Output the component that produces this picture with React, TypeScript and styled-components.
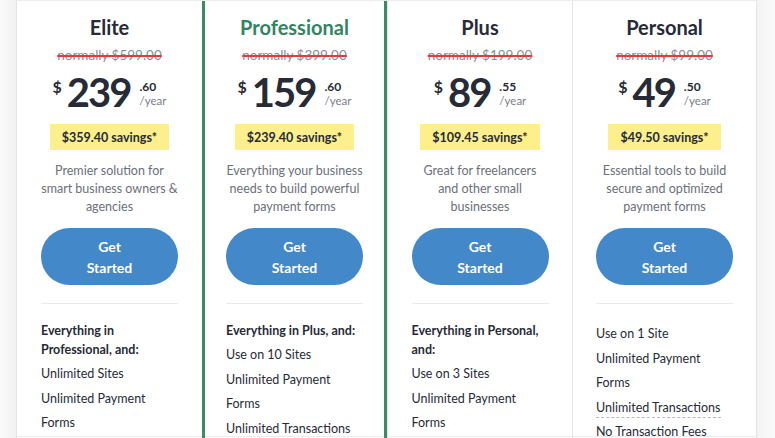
import React from "react";
import styled, { createGlobalStyle } from "styled-components";

const Global = createGlobalStyle`
  html, body { margin: 0; padding: 0; background: #ffffff; }
  body { font-family: "Lato", "Liberation Sans", sans-serif; color: #262b36; }
  * { box-sizing: border-box; }
`;

const Page = styled.div`
  width: 775px;
  height: 438px;
  overflow: hidden;
  display: flex;
  background: #ffffff;
`;

const Gutter = styled.div<{ $side: "left" | "right" }>`
  width: ${(p) => (p.$side === "left" ? 16 : 18)}px;
  flex: none;
  background: ${(p) =>
    p.$side === "left"
      ? "linear-gradient(90deg, #fbfbfb 0%, #f1f1f1 100%)"
      : "linear-gradient(90deg, #f3f3f3 0%, #fafafa 100%)"};
`;

const Table = styled.div`
  flex: none;
  width: 741px;
  height: 437px;
  display: grid;
  grid-template-columns: 186px 185px 185px 185px;
  border-top: 1px solid #ececec;
  border-bottom: 1px solid #ececec;
`;

const Card = styled.div<{ $featured?: boolean }>`
  display: flex;
  flex-direction: column;
  align-items: center;
  border-left: ${(p) => (p.$featured ? "3px solid #3b8a69" : "1px solid #e4e4e4")};
  border-right: ${(p) => (p.$featured ? "3px solid #3b8a69" : "none")};
  &:last-child {
    border-right: 1px solid #e4e4e4;
  }
`;

const Title = styled.h2<{ $featured?: boolean }>`
  margin: 14px 0 0;
  font-size: 20px;
  line-height: 24px;
  font-weight: 700;
  color: ${(p) => (p.$featured ? "#338460" : "#262b36")};
`;

const Normally = styled.div`
  margin-top: 6px;
  font-size: 13.5px;
  line-height: 20px;
  color: #8a8e96;
  text-decoration: line-through;
  text-decoration-color: #e23b3b;
  text-decoration-thickness: 2px;
`;

const PriceRow = styled.div`
  margin-top: 6px;
  display: flex;
  align-items: flex-start;
  height: 42px;
`;

const Currency = styled.span`
  font-size: 16px;
  font-weight: 700;
  line-height: 16px;
  margin-top: 8px;
  margin-right: 5px;
`;

const Amount = styled.span`
  font-size: 40px;
  font-weight: 700;
  line-height: 42px;
  letter-spacing: -2px;
`;

const Cents = styled.div`
  margin-left: 9px;
  margin-top: 9px;
  display: flex;
  flex-direction: column;
`;

const CentsValue = styled.span`
  font-size: 12px;
  font-weight: 700;
  line-height: 14px;
`;

const Per = styled.span`
  font-size: 11.5px;
  line-height: 14px;
  color: #7b808a;
`;

const Savings = styled.div`
  margin-top: 11px;
  background: #fdf08c;
  height: 26px;
  padding: 0 12px;
  display: flex;
  align-items: center;
  font-size: 12.5px;
  font-weight: 700;
  color: #262b36;
`;

const Description = styled.p`
  margin: 12px 0 0;
  text-align: center;
  font-size: 12.5px;
  line-height: 18px;
  color: #6b707a;
`;

const Line = styled.span`
  display: block;
  white-space: nowrap;
`;

const Button = styled.button`
  margin-top: 12px;
  width: 137px;
  height: 57px;
  border: none;
  border-radius: 29px;
  background: #4389ca;
  color: #ffffff;
  font-family: inherit;
  font-size: 14px;
  font-weight: 700;
  line-height: 21px;
  padding: 0 36px;
  cursor: pointer;
`;

const Divider = styled.hr`
  margin: 18px 0 0;
  width: 137px;
  border: none;
  border-top: 1px solid #eaeaea;
  height: 0;
`;

const Features = styled.ul<{ $offset?: number }>`
  list-style: none;
  margin: ${(p) => 17 + (p.$offset || 0)}px 0 0;
  padding: 0;
  width: 137px;
`;

const Lead = styled.li`
  font-size: 12.5px;
  font-weight: 700;
  line-height: 19px;
  margin-bottom: 3px;
`;

const Item = styled.li`
  font-size: 12.5px;
  line-height: 24.5px;
  white-space: nowrap;
`;

const Tip = styled.span`
  border-bottom: 1px dashed #b5b8be;
  padding-bottom: 2px;
`;

type Plan = {
  name: string;
  featured?: boolean;
  normally: string;
  amount: string;
  cents: string;
  savings: string;
  description: string[];
  lead?: string;
  items: { text: string; tip?: boolean }[];
};

const plans: Plan[] = [
  {
    name: "Elite",
    normally: "normally $599.00",
    amount: "239",
    cents: ".60",
    savings: "$359.40 savings*",
    description: ["Premier solution for", "smart business owners &", "agencies"],
    lead: "Everything in Professional, and:",
    items: [{ text: "Unlimited Sites" }, { text: "Unlimited Payment" }, { text: "Forms" }],
  },
  {
    name: "Professional",
    featured: true,
    normally: "normally $399.00",
    amount: "159",
    cents: ".60",
    savings: "$239.40 savings*",
    description: ["Everything your business", "needs to build powerful", "payment forms"],
    lead: "Everything in Plus, and:",
    items: [
      { text: "Use on 10 Sites" },
      { text: "Unlimited Payment" },
      { text: "Forms" },
      { text: "Unlimited Transactions", tip: true },
    ],
  },
  {
    name: "Plus",
    normally: "normally $199.00",
    amount: "89",
    cents: ".55",
    savings: "$109.45 savings*",
    description: ["Great for freelancers", "and other small", "businesses"],
    lead: "Everything in Personal, and:",
    items: [{ text: "Use on 3 Sites" }, { text: "Unlimited Payment" }, { text: "Forms" }],
  },
  {
    name: "Personal",
    normally: "normally $99.00",
    amount: "49",
    cents: ".50",
    savings: "$49.50 savings*",
    description: ["Essential tools to build", "secure and optimized", "payment forms"],
    items: [
      { text: "Use on 1 Site" },
      { text: "Unlimited Payment" },
      { text: "Forms" },
      { text: "Unlimited Transactions", tip: true },
      { text: "No Transaction Fees" },
    ],
  },
];

export default function App() {
  return (
    <>
      <Global />
      <Page>
        <Gutter $side="left" />
        <Table>
          {plans.map((p) => (
            <Card key={p.name} $featured={p.featured}>
              <Title $featured={p.featured}>{p.name}</Title>
              <Normally>{p.normally}</Normally>
              <PriceRow>
                <Currency>$</Currency>
                <Amount>{p.amount}</Amount>
                <Cents>
                  <CentsValue>{p.cents}</CentsValue>
                  <Per>/year</Per>
                </Cents>
              </PriceRow>
              <Savings>{p.savings}</Savings>
              <Description>
                {p.description.map((l) => (
                  <Line key={l}>{l}</Line>
                ))}
              </Description>
              <Button>Get Started</Button>
              <Divider />
              <Features $offset={p.lead ? 0 : 1}>
                {p.lead && <Lead>{p.lead}</Lead>}
                {p.items.map((it) => (
                  <Item key={it.text}>{it.tip ? <Tip>{it.text}</Tip> : it.text}</Item>
                ))}
              </Features>
            </Card>
          ))}
        </Table>
        <Gutter $side="right" />
      </Page>
    </>
  );
}
